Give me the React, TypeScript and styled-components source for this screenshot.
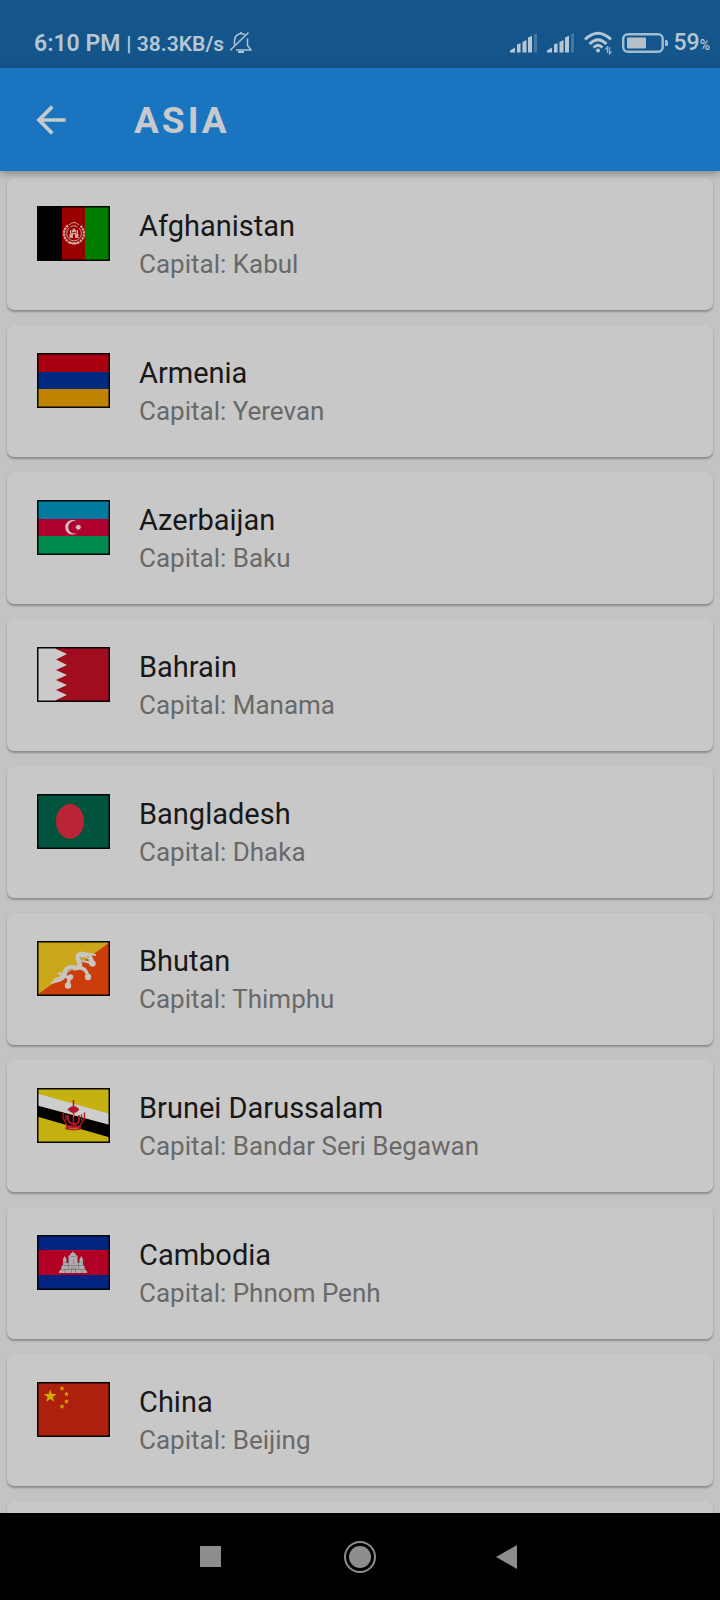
import React from "react";
import styled, { createGlobalStyle } from "styled-components";

const GlobalStyle = createGlobalStyle`
  * { box-sizing: border-box; }
  body { margin: 0; background: #000; font-family: Roboto, sans-serif; }
`;

const Screen = styled.div`
  display: flex;
  flex-direction: column;
  height: 100vh;
  background: #c3c3c3;
`;

const StatusBar = styled.div`
  display: flex;
  flex: none;
  align-items: center;
  justify-content: space-between;
  height: 68px;
  padding: 18px 10px 0 34px;
  background: #14568c;
  color: #b6c6d3;
`;

const StatusGroup = styled.div<{ $gap: number }>`
  display: flex;
  align-items: center;
  gap: ${(p) => p.$gap}px;
  svg { display: block; flex: none; }
`;

const StatusText = styled.span<{ $size: number; $weight?: number }>`
  padding-top: 2px;
  font-size: ${(p) => p.$size}px;
  font-weight: ${(p) => p.$weight ?? 500};
  line-height: 26px;
  white-space: nowrap;
`;

const Battery = styled.span`
  display: flex;
  align-items: baseline;
  margin-left: -4px;
`;

const AppBar = styled.header`
  display: flex;
  flex: none;
  align-items: center;
  gap: 61px;
  height: 103px;
  padding: 0 29px;
  background: #1b74bf;
  box-shadow: 0 2px 8px rgba(0, 0, 0, 0.35);
  z-index: 1;
`;

const IconButton = styled.button`
  display: flex;
  align-items: center;
  justify-content: center;
  padding: 0;
  border: 0;
  background: none;
  cursor: pointer;
`;

const Title = styled.h1`
  margin: 0;
  padding-top: 2px;
  color: #c6cace;
  font-size: 37px;
  font-weight: 700;
  line-height: 44px;
  letter-spacing: 3px;
`;

const CountryList = styled.ul`
  display: flex;
  flex: 1;
  flex-direction: column;
  gap: 15px;
  min-height: 0;
  margin: 0;
  padding: 7px 7px 0;
  list-style: none;
  overflow-y: auto;
  scrollbar-width: none;
`;

const Card = styled.li`
  display: flex;
  flex: none;
  align-items: flex-start;
  gap: 29px;
  min-height: 132px;
  padding: 28px 30px;
  border-radius: 7px;
  background: #c8c8c8;
  box-shadow: 0 2px 2px rgba(0, 0, 0, 0.25), 0 1px 3px rgba(0, 0, 0, 0.06);
`;

const Flag = styled.svg`
  display: block;
  flex: none;
  width: 73px;
  height: 55px;
`;

const CardText = styled.div`
  display: flex;
  flex-direction: column;
`;

const Name = styled.h2`
  margin: 0;
  color: #181818;
  font-size: 29px;
  font-weight: 400;
  line-height: 40px;
`;

const Capital = styled.p`
  margin: 0;
  color: #696969;
  font-size: 26px;
  line-height: 36px;
`;

const NavBar = styled.nav`
  display: flex;
  flex: none;
  align-items: center;
  justify-content: center;
  gap: 117px;
  height: 87px;
  background: #000;
`;

const starPoints = (cx: number, cy: number, r: number, n = 5, inner = 0.4) =>
  Array.from({ length: n * 2 }, (_, i) => {
    const a = -Math.PI / 2 + (i * Math.PI) / n;
    const k = i % 2 ? r * inner : r;
    return `${(cx + k * Math.cos(a)).toFixed(2)},${(cy + k * Math.sin(a)).toFixed(2)}`;
  }).join(" ");

const Stripes = ({ colors, at }: { colors: string[]; at: number[] }) => (
  <>
    {colors.map((c, i) => (
      <rect key={i} x="0" y={at[i]} width="73" height={at[i + 1] - at[i]} fill={c} />
    ))}
  </>
);

const Afghanistan = () => (
  <>
    <rect width="25" height="55" fill="#000" />
    <rect x="25" width="23" height="55" fill="#980000" />
    <rect x="48" width="25" height="55" fill="#007c00" />
    <g fill="none" stroke="#d2a49c">
      <path d="M31 19.500a10 10 0 1 0 12 0" strokeWidth="2.200" strokeDasharray="2.400 .7" />
      <path d="M32 22a7.400 7.400 0 1 0 10 0" strokeWidth="1" />
      <path d="M32 19q5-5 10 0M33.500 21q3.500-3 7 0" strokeWidth="1" />
    </g>
    <path d="M32.500 32v-4h2v-3l2.500-3 2.500 3v3h2v4zM33 24h1v4h-1zM40 24h1v4h-1z" fill="#d2a49c" />
    <path d="M36 32v-3q1-2 2 0v3zM35.500 26h3v1h-3z" fill="#980000" />
    <path d="M32 36.500q5 2 10 0" fill="none" stroke="#d2a49c" strokeWidth="1.800" />
  </>
);

const Armenia = () => <Stripes colors={["#a9000f", "#002a80", "#c08300"]} at={[0, 19, 36, 55]} />;

const Azerbaijan = () => (
  <>
    <Stripes colors={["#007a9e", "#b00030", "#008a50"]} at={[0, 19, 36, 55]} />
    <path d="M40 21.500a7.300 7.300 0 1 0 0 11.600a6.300 6.300 0 1 1 0-11.600z" fill="#d4c2c8" />
    <polygon points={starPoints(41.3, 27.3, 3.2, 8, 0.6)} fill="#d4c2c8" />
  </>
);

const Bahrain = () => (
  <>
    <rect width="73" height="55" fill="#a00d1e" />
    <path d="M0 0H19V2L30 7L19 12.500L30 18L19 23L30 28L19 33L30 38L19 43L30 48L19 53V55H0z" fill="#cbcbcb" />
  </>
);

const Bangladesh = () => (
  <>
    <rect width="73" height="55" fill="#00543d" />
    <ellipse cx="33" cy="27.500" rx="14" ry="17.500" fill="#bb2336" />
  </>
);

const Bhutan = () => (
  <>
    <rect width="73" height="55" fill="#caa71b" />
    <path d="M0 54L73 1V55H0z" fill="#cb3d0b" />
    <g fill="none" stroke="#cbc5bf" strokeLinecap="round" strokeLinejoin="round">
      <path d="M20 39Q27 38 28 31Q31 25 38 27Q45 27 42 20Q39 14 45 13" strokeWidth="5" />
      <path d="M44 14Q52 12 54 19" strokeWidth="5" />
      <path d="M43 27Q49 27 51 35M28 35Q34 37 31 43" strokeWidth="3.400" />
      <path d="M48 15l6-2 4 1M54 18l2 4M44 20q5 0 9 2M20 39l-5 3M26 35l-4-3" strokeWidth="2.200" />
    </g>
    <g fill="#cbc5bf">
      <circle cx="51" cy="36" r="3.200" />
      <circle cx="31" cy="44.500" r="3.200" />
      <circle cx="55.500" cy="22.500" r="3.200" />
      <circle cx="33.500" cy="36" r="2.700" />
      <circle cx="18" cy="40" r="2" />
    </g>
    <path d="M30 30q3-3 7-1M43 16q3 4 2 7M50 15l2 1M49 18l3 1" fill="none" stroke="#8f7c70" strokeWidth=".7" />
  </>
);

const Brunei = () => (
  <>
    <rect width="73" height="55" fill="#c5b110" />
    <path d="M0 5.500L73 26V37L0 17.500z" fill="#cdcdcd" />
    <path d="M0 17.500L73 37V49.500L0 28.500z" fill="#000" />
    <g fill="none" stroke="#b3182a" strokeLinecap="round">
      <path d="M36.500 12.500V38" strokeWidth="1.600" />
      <path d="M31 21.500q2-3 5.500-3t5.500 3q-2 3-5.500 3t-5.500-3z" fill="#b3182a" strokeWidth=".8" />
      <path d="M31 28Q30 35 36.500 36T42 28" strokeWidth="2" />
      <path d="M26 25v5l4 7M29 27v5M47.500 25v5l-4 7M44.500 27v5" strokeWidth="1.400" />
      <path d="M30 37l3 2 1-2 2.500 2 2.500-2 1 2 3-2 1 4q-7.500 2-15 0z" fill="#b3182a" strokeWidth=".8" />
    </g>
    <path d="M32 40q4.500 1.500 9 0M36.500 26v3" fill="none" stroke="#c5a414" strokeWidth=".7" />
  </>
);

const Cambodia = () => (
  <>
    <Stripes colors={["#022380", "#b00024", "#022380"]} at={[0, 15, 40, 55]} />
    <path
      d="M22 38v-1.500l2.500-3V31l1.500-1v-6l1.800-3 1.700 3v4h2v-7l1.500-1 1-2h1l1-2 1 2h1l1 2 1.500 1v7h2v-4l1.700-3 1.800 3v6l1.500 1v2.500l2.500 3V38z"
      fill="#b0acad"
    />
    <path
      d="M24 34.500h25M25.500 30.500h22M31.500 26v8M41.500 26v8M34 21.500h5M26 27h3.500M44 27h3.500M34.500 38v-5h4v5M28 38v-4M45 38v-4M36.500 24v5"
      fill="none"
      stroke="#6d696b"
      strokeWidth=".6"
    />
  </>
);

const China = () => (
  <>
    <rect width="73" height="55" fill="#ac200d" />
    <polygon points={starPoints(13.2, 14.2, 6.8)} fill="#ceb000" />
    {[[25, 6.5], [29.5, 12], [29.5, 19.5], [25, 24.5]].map(([x, y]) => (
      <polygon key={y} points={starPoints(x, y, 2.4, 5, 0.6)} fill="#c89a04" />
    ))}
  </>
);

const countries: { name: string; capital: string; Art: React.FC }[] = [
  { name: "Afghanistan", capital: "Kabul", Art: Afghanistan },
  { name: "Armenia", capital: "Yerevan", Art: Armenia },
  { name: "Azerbaijan", capital: "Baku", Art: Azerbaijan },
  { name: "Bahrain", capital: "Manama", Art: Bahrain },
  { name: "Bangladesh", capital: "Dhaka", Art: Bangladesh },
  { name: "Bhutan", capital: "Thimphu", Art: Bhutan },
  { name: "Brunei Darussalam", capital: "Bandar Seri Begawan", Art: Brunei },
  { name: "Cambodia", capital: "Phnom Penh", Art: Cambodia },
  { name: "China", capital: "Beijing", Art: China },
];

const Signal = () => (
  <svg width="27" height="20" viewBox="0 0 27 20" fill="#b6c6d3" aria-hidden="true">
    <path d="M0 19.500v-2l5-3v5zM7 11.500l3.500-1.500v9.500h-3.500zM12.500 9l4-2v12.500h-4zM18 4.500l4-1.800v16.800h-4z" />
    <path d="M24 1.500L27 0v19.500h-3z" opacity=".3" />
  </svg>
);

const Wifi = () => (
  <svg width="28" height="24" viewBox="0 0 28 24" fill="none" stroke="#b6c6d3" aria-hidden="true">
    <path d="M1 8.500Q14-4 27 8.500" strokeWidth="3" />
    <path d="M5.500 13Q14 4.500 22.500 13" strokeWidth="3" />
    <path d="M9.500 16.500Q14 12 18.500 16.500" strokeWidth="2.600" />
    <circle cx="14" cy="19.500" r="2" fill="#b6c6d3" stroke="none" />
    <path d="M23.500 22v-6l-2 2.500M25.500 16v7l2-2.500" strokeWidth="1.300" opacity=".8" />
  </svg>
);

const BatteryIcon = () => (
  <svg width="46" height="20" viewBox="0 0 46 20" aria-hidden="true">
    <rect x="1.200" y="1.200" width="39.500" height="17.600" rx="4.500" fill="none" stroke="#a3bdd0" strokeWidth="2.400" />
    <rect x="5" y="4.500" width="19" height="11" rx="1" fill="#b6c0c8" />
    <path d="M43 7h1.500q1.500 0 1.500 1.500v3q0 1.500-1.500 1.500H43z" fill="#a3bdd0" />
  </svg>
);

const MutedBell = () => (
  <svg width="22" height="22" viewBox="0 0 22 22" fill="none" stroke="#b0c3d1" strokeWidth="1.500" aria-hidden="true">
    <path d="M4.500 13.500V9q0-6.500 6.500-7.500V0v1.500q2.500 0 4 1.500M17.500 6.500V13.500L21 18H6" />
    <path d="M0 18.500L18.500.500" />
    <path d="M8 20h6" strokeWidth="2" />
  </svg>
);

export default function App() {
  return (
    <Screen>
      <GlobalStyle />
      <StatusBar>
        <StatusGroup $gap={6}>
          <StatusText $size={23} $weight={600}>6:10 PM</StatusText>
          <StatusText $size={21} $weight={600}>| 38.3KB/s</StatusText>
          <MutedBell />
        </StatusGroup>
        <StatusGroup $gap={10}>
          <Signal />
          <Signal />
          <Wifi />
          <BatteryIcon />
          <Battery>
            <StatusText $size={23}>59</StatusText>
            <StatusText $size={14}>%</StatusText>
          </Battery>
        </StatusGroup>
      </StatusBar>
      <AppBar>
        <IconButton type="button" aria-label="Back">
          <svg width="44" height="44" viewBox="0 0 24 24" fill="#c6cace">
            <path d="M20 11H7.830l5.590-5.590L12 4l-8 8 8 8 1.410-1.410L7.830 13H20v-2z" />
          </svg>
        </IconButton>
        <Title>ASIA</Title>
      </AppBar>
      <CountryList>
        {countries.map(({ name, capital, Art }) => (
          <Card key={name}>
            <Flag viewBox="0 0 73 55" role="img" aria-label={`Flag of ${name}`}>
              <Art />
              <rect x=".75" y=".75" width="71.500" height="53.500" fill="none" stroke="#060606" strokeWidth="1.500" />
            </Flag>
            <CardText>
              <Name>{name}</Name>
              <Capital>Capital: {capital}</Capital>
            </CardText>
          </Card>
        ))}
        <Card aria-hidden="true" />
      </CountryList>
      <NavBar aria-label="System">
        <IconButton type="button" aria-label="Recent apps">
          <svg width="32" height="32" fill="#8d8d8d">
            <rect x="5" y="5" width="21" height="21" />
          </svg>
        </IconButton>
        <IconButton type="button" aria-label="Home">
          <svg width="32" height="32" fill="#8d8d8d">
            <circle cx="16" cy="16" r="15" fill="none" stroke="#8d8d8d" strokeWidth="2" />
            <circle cx="16" cy="16" r="11" />
          </svg>
        </IconButton>
        <IconButton type="button" aria-label="Back to previous app">
          <svg width="32" height="32" fill="#8d8d8d">
            <path d="M3 16L24 4V28z" />
          </svg>
        </IconButton>
      </NavBar>
    </Screen>
  );
}
